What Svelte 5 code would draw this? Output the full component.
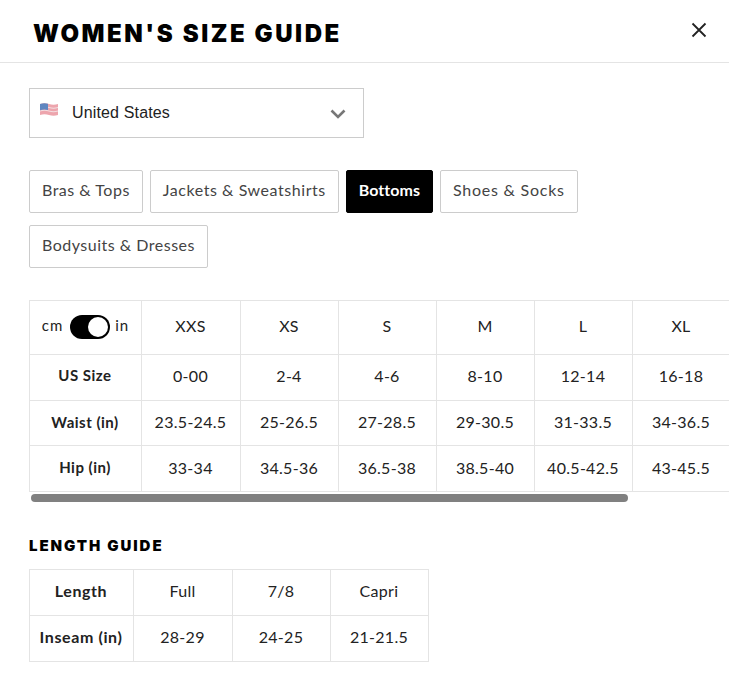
<script>
  const tabs = ['Bras & Tops', 'Jackets & Sweatshirts', 'Bottoms', 'Shoes & Socks', 'Bodysuits & Dresses'];
  let selected = $state('Bottoms');
  let inches = $state(true);

  const sizes = ['XXS', 'XS', 'S', 'M', 'L', 'XL'];
  const rows = [
    { label: 'US Size', values: ['0-00', '2-4', '4-6', '8-10', '12-14', '16-18'] },
    { label: 'Waist (in)', values: ['23.5-24.5', '25-26.5', '27-28.5', '29-30.5', '31-33.5', '34-36.5'] },
    { label: 'Hip (in)', values: ['33-34', '34.5-36', '36.5-38', '38.5-40', '40.5-42.5', '43-45.5'] }
  ];
</script>

<div class="modal">
  <header class="top">
    <h1>WOMEN'S SIZE GUIDE</h1>
    <button type="button" class="close" aria-label="Close">
      <svg width="16" height="16" viewBox="0 0 16 16">
        <path d="M1.5 1.5l13 13M14.5 1.5l-13 13" fill="none" stroke="#222" stroke-width="1.8" />
      </svg>
    </button>
  </header>

  <div class="body">
    <div class="country">
      <svg class="flag" width="18" height="13" viewBox="0 0 18 13">
        <path d="M0 1q4.500-1.500 9 0t9 0v11q-4.500 1.500-9 0t-9 0z" fill="#eda5ad" />
        <path d="M0 4q4.500-1.500 9 0t9 0v1q-4.500 1.500-9 0t-9 0zM0 7.500q4.500-1.500 9 0t9 0v1q-4.500 1.500-9 0t-9 0z" fill="#f3dfe2" />
        <path d="M0 1q4-1.400 8-.3v6.300q-4-1.100-8 .3z" fill="#5f86c0" />
      </svg>
      <span class="country-name">United States</span>
      <svg class="chevron" width="16" height="10" viewBox="0 0 16 10">
        <path d="M1.500 1.500L8 8l6.500-6.500" fill="none" stroke="#777" stroke-width="2.600" />
      </svg>
    </div>

    <div class="tabs">
      {#each tabs as tab}
        <button type="button" class="tab" class:active={selected === tab} onclick={() => (selected = tab)}>{tab}</button>
      {/each}
    </div>

    <div class="scroller">
      <table class="sizes">
        <tbody>
          <tr class="head">
            <td class="first">
              <div class="unit">
                <span>cm</span>
                <button type="button" class="switch" class:on={inches} aria-label="Toggle units" onclick={() => (inches = !inches)}>
                  <span class="knob"></span>
                </button>
                <span>in</span>
              </div>
            </td>
            {#each sizes as size}
              <td>{size}</td>
            {/each}
          </tr>
          {#each rows as row}
            <tr>
              <th>{row.label}</th>
              {#each row.values as value}
                <td>{value}</td>
              {/each}
            </tr>
          {/each}
        </tbody>
      </table>
    </div>
    <div class="scrollbar"><div class="thumb"></div></div>

    <h2>LENGTH GUIDE</h2>
    <table class="lengths">
      <tbody>
        <tr>
          <th>Length</th>
          <td>Full</td>
          <td>7/8</td>
          <td>Capri</td>
        </tr>
        <tr>
          <th>Inseam (in)</th>
          <td>28-29</td>
          <td>24-25</td>
          <td>21-21.5</td>
        </tr>
      </tbody>
    </table>
  </div>
</div>

<style>
  :global(body) {
    margin: 0;
    background: #fff;
  }

  .modal {
    width: 729px;
    height: 697px;
    overflow: hidden;
    color: #222;
    font-family: Lato, 'Open Sans', sans-serif;
  }

  .top {
    display: flex;
    align-items: center;
    justify-content: space-between;
    height: 62px;
    padding: 0 22px 0 33px;
    border-bottom: 1px solid #e4e4e4;
  }

  h1 {
    margin: 6px 0 0;
    font-family: Inter, sans-serif;
    font-size: 24px;
    line-height: 32px;
    font-weight: 900;
    letter-spacing: 2.55px;
    color: #000;
  }

  .close {
    display: flex;
    padding: 0;
    margin-top: -2px;
    background: none;
    border: 0;
    cursor: pointer;
  }

  .body {
    padding: 25px 0 0 29px;
  }

  .country {
    display: flex;
    align-items: center;
    box-sizing: border-box;
    width: 335px;
    height: 50px;
    padding: 0 17px 0 10px;
    border: 1px solid #ccc;
    font-family: 'Liberation Sans', Arial, sans-serif;
    font-size: 16px;
    letter-spacing: 0.15px;
    color: #222;
  }

  .flag {
    margin-top: -7px;
  }

  .country-name {
    flex: 1;
    margin-left: 14px;
    margin-top: -1px;
  }

  .chevron {
    margin-top: 2px;
  }

  .tabs {
    display: flex;
    flex-wrap: wrap;
    gap: 12px 7px;
    width: 600px;
    margin-top: 32px;
  }

  .tab {
    box-sizing: border-box;
    height: 43px;
    padding: 0 12px 5px;
    background: #fff;
    border: 1px solid #ccc;
    border-radius: 2px;
    color: #444;
    font-family: inherit;
    font-size: 16px;
    letter-spacing: 0.5px;
    cursor: pointer;
  }

  .tab:nth-child(2) {
    letter-spacing: 0.55px;
  }

  .tab:nth-child(4) {
    letter-spacing: 0.75px;
  }

  .tab.active {
    background: #000;
    border-color: #000;
    color: #fff;
    font-weight: 700;
    letter-spacing: 0.05px;
  }

  .scroller {
    margin-top: 32px;
    overflow: hidden;
  }

  table {
    border-collapse: collapse;
    table-layout: fixed;
    font-size: 16px;
    letter-spacing: 0.3px;
    text-align: center;
    color: #222;
  }

  th,
  td {
    box-sizing: border-box;
    padding: 0 1px 3px 0;
    border: 1px solid #e4e4e4;
  }

  th {
    font-size: 15px;
    font-weight: 700;
    letter-spacing: 0.5px;
  }

  .sizes {
    width: 702px;
  }

  .sizes th,
  .sizes td {
    width: 98px;
    height: 46px;
  }

  .sizes .first,
  .sizes th {
    width: 112px;
  }

  .sizes .head td:nth-child(2) {
    width: 99px;
  }

  .sizes .head td {
    height: 54px;
    padding-bottom: 5px;
  }

  .sizes .head .first {
    padding-right: 0;
  }

  .sizes tr:nth-child(2) th,
  .sizes tr:nth-child(2) td {
    padding-bottom: 5px;
  }

  .sizes tr:nth-child(3) th,
  .sizes tr:nth-child(3) td {
    height: 45px;
  }

  .unit {
    display: flex;
    align-items: center;
    justify-content: center;
    gap: 6px;
    font-size: 15px;
    letter-spacing: 1px;
  }

  .switch {
    position: relative;
    width: 40px;
    height: 24px;
    margin: 3px -1px 0 1px;
    padding: 0;
    background: #000;
    border: 0;
    border-radius: 12px;
    cursor: pointer;
  }

  .knob {
    position: absolute;
    top: 2px;
    left: 2px;
    width: 20px;
    height: 20px;
    background: #fff;
    border-radius: 50%;
  }

  .switch.on .knob {
    left: 18px;
  }

  .scrollbar {
    height: 8px;
    margin: 2px 0 0 2px;
  }

  .thumb {
    width: 597px;
    height: 8px;
    background: #808080;
    border-radius: 4px;
  }

  h2 {
    margin: 34px 0 13px;
    font-family: Inter, sans-serif;
    font-size: 15px;
    line-height: 20px;
    font-weight: 900;
    letter-spacing: 1.95px;
    color: #000;
  }

  .lengths {
    width: 400px;
  }

  .lengths th,
  .lengths td {
    width: 98px;
    height: 46px;
    padding-bottom: 5px;
  }

  .lengths th {
    width: 104px;
    font-size: 16px;
    letter-spacing: 0.6px;
  }

  .lengths td:nth-child(2) {
    width: 99px;
  }
</style>
